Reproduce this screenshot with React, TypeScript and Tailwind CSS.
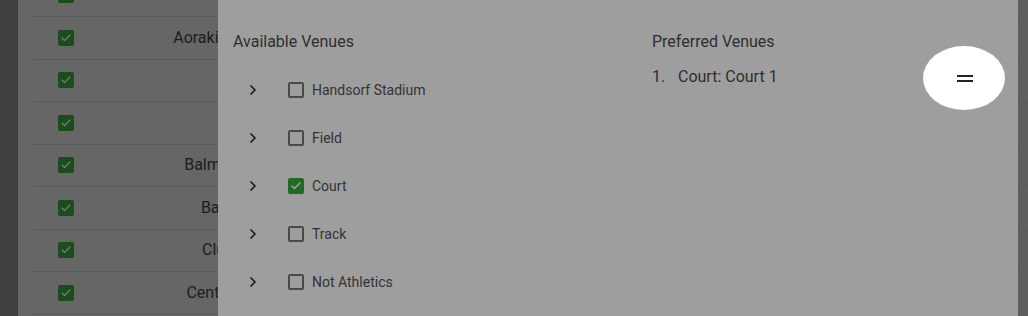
import React from 'react';
import { Check, ChevronRight } from 'lucide-react';

const tableRows = ['Ainsley Oval', 'Aoraki Stadium 1', 'Park', 'Oval', 'Balmoral Park', 'Bays Hall', 'Club Hall', 'Central Parks'];

const venues = [
  { name: 'Handsorf Stadium', checked: false },
  { name: 'Field', checked: false },
  { name: 'Court', checked: true },
  { name: 'Track', checked: false },
  { name: 'Not Athletics', checked: false },
];

const App = () => {
  return (
    <div className="relative flex h-[316px] w-[1028px] overflow-hidden bg-[#404040] font-['Roboto',sans-serif]">
      {/* page behind the dialog */}
      <div className="ml-[18px] flex-1 bg-gradient-to-r from-[#666666] from-90% to-[#5e5e5e]">
        <div className="-mt-[25.5px] ml-[15px]">
          {tableRows.map((name, i) => (
            <div key={i} className="flex h-[42.5px] items-center border-b border-[#5a5a5a]">
              <div className="ml-[25px] flex h-4 w-4 items-center justify-center rounded-[2px] bg-[#1b4d1c]">
                <Check className="h-3 w-3 text-[#777]" strokeWidth={2.5} />
              </div>
              <div className="w-[300px] pl-[20px] text-center text-[16px] text-[#1c1c1c]">{name}</div>
            </div>
          ))}
        </div>
      </div>

      {/* dialog */}
      <div className="absolute left-[218px] top-0 flex h-[316px] w-[800px] bg-[#9e9e9e] pl-[15px] pt-[32px] text-[#2e2e2e]">
        <div className="w-[419px]">
          <h2 className="h-[20px] text-[16px] leading-[20px]">Available Venues</h2>
          <div className="mt-[14px]">
            {venues.map((v) => (
              <div key={v.name} className="flex h-[48px] items-center">
                <div className="flex w-[40px] justify-center">
                  <ChevronRight className="h-4 w-4 text-[#1a1a1a]" strokeWidth={2.5} />
                </div>
                <div className="ml-[15px]">
                  {v.checked ? (
                    <div className="flex h-4 w-4 items-center justify-center rounded-[2px] bg-[#1f6b22]">
                      <Check className="h-3 w-3 text-[#a8a8a8]" strokeWidth={2.5} />
                    </div>
                  ) : (
                    <div className="h-4 w-4 rounded-[2px] border-2 border-[#4a4a4a]" />
                  )}
                </div>
                <span className="ml-[8px] text-[14px] text-[#333]">{v.name}</span>
              </div>
            ))}
          </div>
        </div>
        <div className="flex-1">
          <h2 className="h-[20px] text-[16px] leading-[20px]">Preferred Venues</h2>
          <div className="mt-[15px] flex text-[16px] leading-[20px]">
            <span className="w-[26px]">1.</span>
            <span>Court: Court 1</span>
          </div>
        </div>
        {/* drag handle */}
        <div className="absolute left-[705px] top-[46px] flex h-[64px] w-[82px] items-center justify-center rounded-[50%] bg-white">
          <div className="ml-[2px] flex flex-col gap-[3px]">
            <div className="h-[2px] w-[16px] bg-[#222]" />
            <div className="h-[2px] w-[16px] bg-[#222]" />
          </div>
        </div>
      </div>
    </div>
  );
};

export default App;
